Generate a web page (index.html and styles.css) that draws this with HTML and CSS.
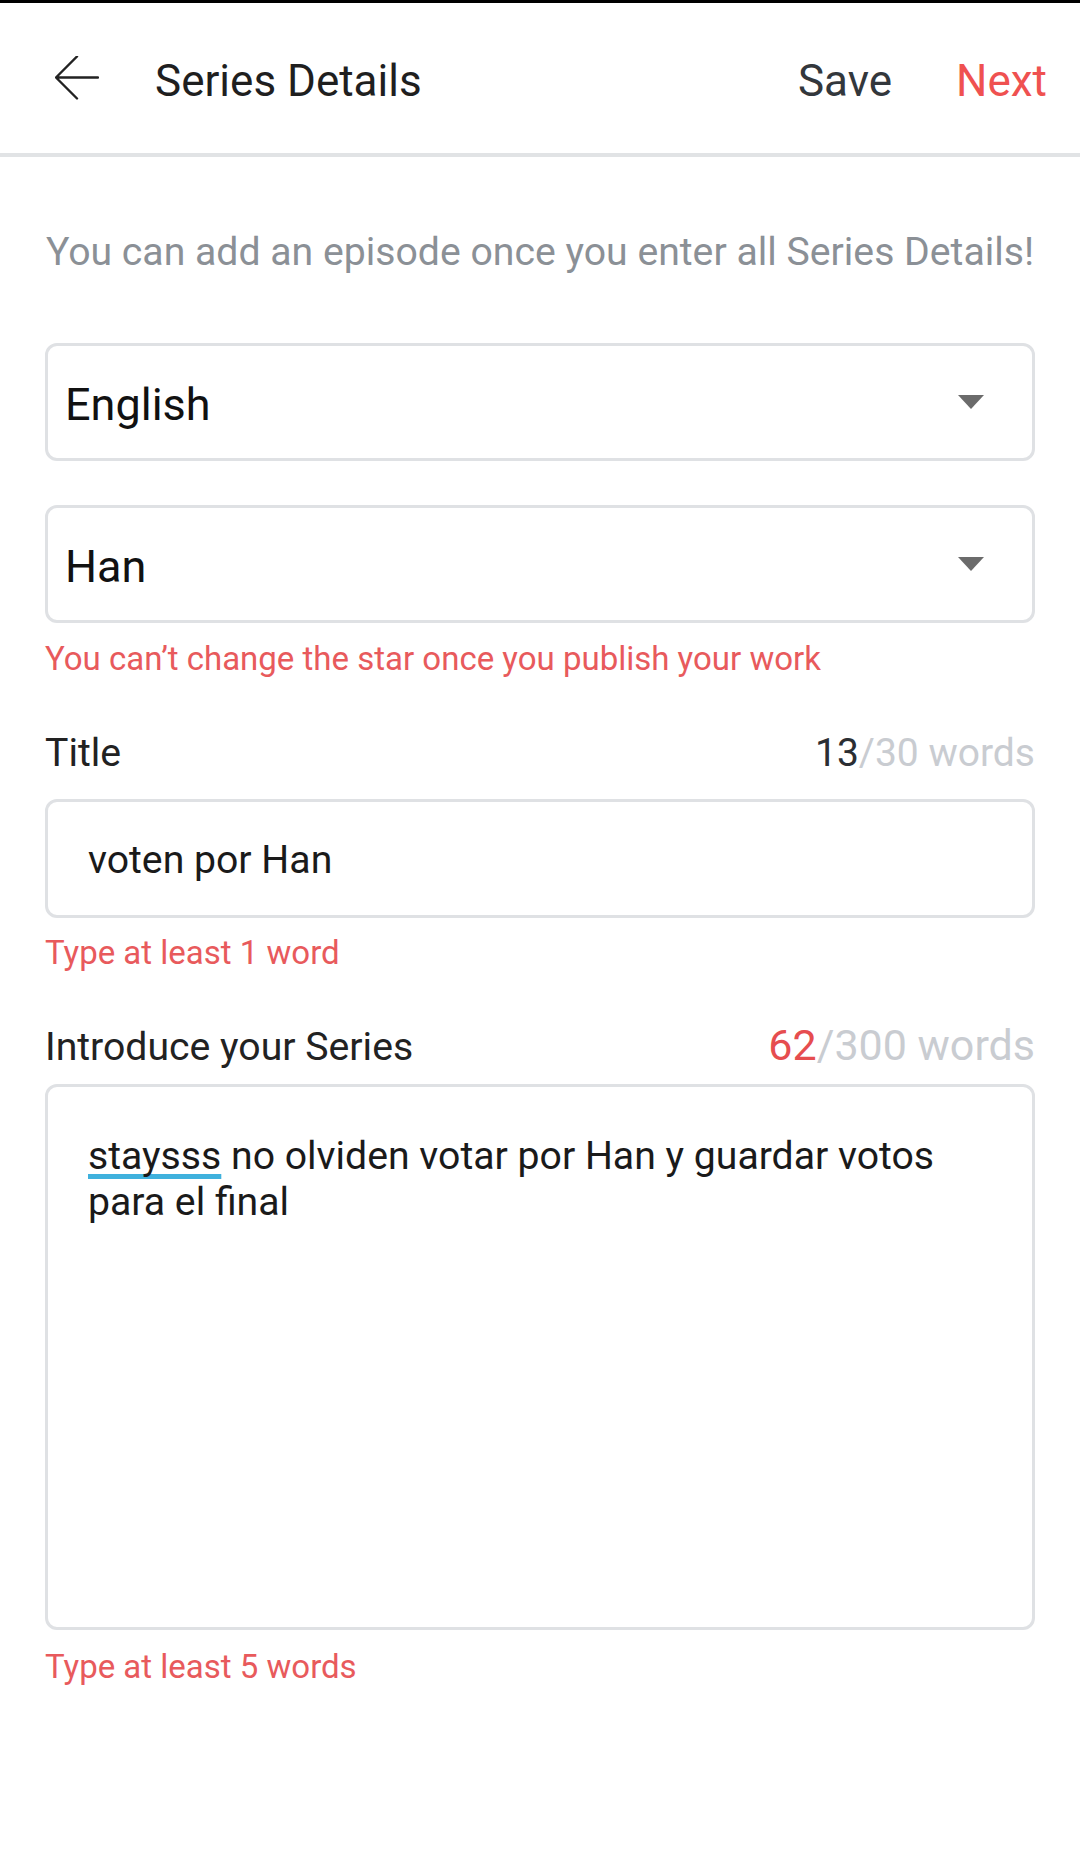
FILE: index.html
```html
<!DOCTYPE html>
<html lang="en">
<head>
    <meta charset="UTF-8">
    <meta name="viewport" content="width=device-width, initial-scale=1.0">
    <title>Series Details</title>
    <link rel="stylesheet" href="styles.css">
</head>
<body>
    <div class="status-strip"></div>
    <header class="topbar">
        <button class="back-btn" aria-label="Back">
            <svg width="44" height="44" viewBox="0 0 44 44">
                <path d="M1 21.5 H43 M22 0.5 L1 21.5 L22 42.5" fill="none" stroke="#222" stroke-width="2.4" stroke-linecap="round" stroke-linejoin="round"/>
            </svg>
        </button>
        <h1 class="topbar-title">Series Details</h1>
        <div class="topbar-actions">
            <span class="action save">Save</span>
            <span class="action next">Next</span>
        </div>
    </header>

    <main class="series-form">
        <p class="intro">You can add an episode once you enter all Series Details!</p>

        <div class="select-box first">
            <span class="select-value">English</span>
            <span class="caret"></span>
        </div>

        <div class="select-box">
            <span class="select-value">Han</span>
            <span class="caret"></span>
        </div>
        <p class="hint">You can’t change the star once you publish your work</p>

        <div class="field-head">
            <span class="field-label">Title</span>
            <span class="counter"><span class="count">13</span>/30 words</span>
        </div>
        <div class="text-input">voten por Han</div>
        <p class="hint">Type at least 1 word</p>

        <div class="field-head intro-head">
            <span class="field-label">Introduce your Series</span>
            <span class="counter big"><span class="count over">62</span>/300 words</span>
        </div>
        <div class="text-area"><span class="spell">staysss</span> no olviden votar por Han y guardar votos para el final</div>
        <p class="hint">Type at least 5 words</p>
    </main>
</body>
</html>
```

FILE: styles.css
```css
body {
    margin: 0;
    padding: 0;
    width: 1080px;
    background: #fff;
    font-family: Roboto, 'Noto Sans', sans-serif;
    color: #222;
}

.status-strip {
    height: 3px;
    background: #000;
}

.topbar {
    display: flex;
    align-items: center;
    height: 150px;
    padding: 0 33px 0 55px;
    border-bottom: 4px solid #e1e3e5;
}

.back-btn {
    display: flex;
    width: 44px;
    height: 44px;
    padding: 0;
    margin: 0 56px 0 0;
    border: none;
    background: none;
}

.topbar-title {
    flex: 1;
    margin: 0;
    font-size: 44px;
    font-weight: 400;
    color: #1f1f1f;
    position: relative;
    top: 3px;
}

.topbar-actions {
    display: flex;
    gap: 64px;
    position: relative;
    top: 3px;
}

.action {
    font-size: 44px;
}

.save {
    color: #33373c;
}

.next {
    color: #ef5150;
}

.series-form {
    padding: 0 45px;
}

.intro {
    margin: 72px 0 0;
    font-size: 39.2px;
    line-height: 46px;
    color: #8b9096;
    text-align: center;
}

.select-box {
    display: flex;
    align-items: center;
    justify-content: space-between;
    box-sizing: content-box;
    height: 108px;
    margin-top: 44px;
    padding: 4px 48px 0 17px;
    border: 3px solid #dfe1e4;
    border-radius: 12px;
}

.select-box.first {
    margin-top: 68px;
}

.select-value {
    font-size: 45px;
    color: #111;
}

.caret {
    width: 0;
    height: 0;
    margin-top: -4px;
    border-left: 13px solid transparent;
    border-right: 13px solid transparent;
    border-top: 14px solid #6b6b6b;
}

.hint {
    margin: 16px 0 0;
    font-size: 33px;
    line-height: 40px;
    color: #e85a5c;
}

.field-head {
    display: flex;
    justify-content: space-between;
    align-items: baseline;
    margin-top: 51px;
    line-height: 46px;
}

.field-label {
    font-size: 39.2px;
    color: #222;
}

.counter {
    font-size: 39px;
    color: #c9ccd1;
}

.counter.big {
    font-size: 43px;
}

.count {
    color: #2b2e33;
}

.count.over {
    color: #e64d4f;
}

.text-input {
    display: flex;
    align-items: center;
    height: 110px;
    margin-top: 23px;
    padding: 3px 40px 0;
    border: 3px solid #dfe1e4;
    border-radius: 12px;
    font-size: 39.2px;
    color: #1a1a1a;
}

.text-input + .hint {
    margin-top: 15px;
}

.intro-head {
    margin-top: 49px;
}

.text-area {
    height: 494px;
    margin-top: 14px;
    padding: 46px 40px 0 40px;
    border: 3px solid #dfe1e4;
    border-radius: 12px;
    font-size: 39.2px;
    line-height: 46px;
    color: #1a1a1a;
}

.spell {
    text-decoration: underline;
    text-decoration-color: #3fb1dd;
    text-decoration-thickness: 5px;
    text-underline-offset: 5px;
    text-decoration-skip-ink: none;
}

.text-area + .hint {
    margin-top: 17px;
}
```
